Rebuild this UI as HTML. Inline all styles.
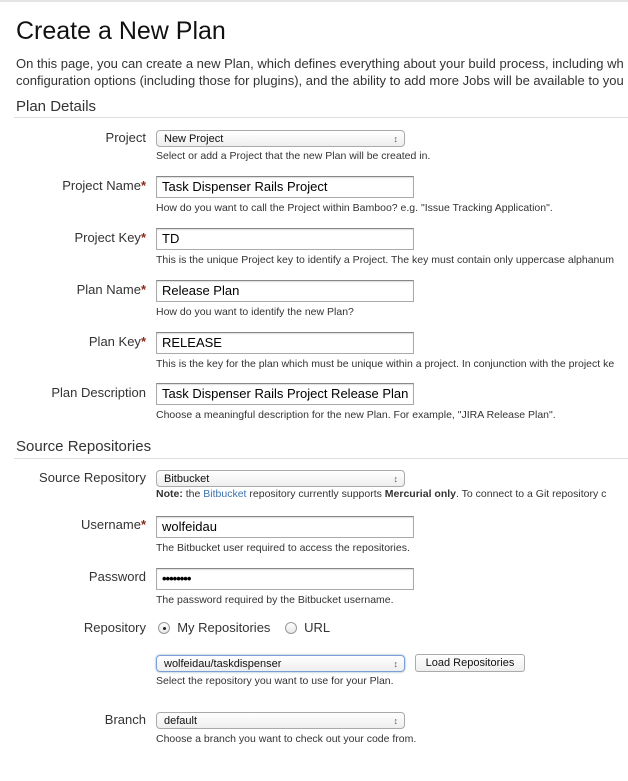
<!DOCTYPE html>
<html><head><meta charset="utf-8"><style>
body{margin:0;width:628px;height:781px;overflow:hidden;background:#fff;font-family:"Liberation Sans",Arial,sans-serif;color:#333;position:relative}
.a{position:absolute;white-space:nowrap}
.lbl{position:absolute;right:482px;font-size:13px;color:#333;white-space:nowrap}
.req{color:#8b2a1a;font-weight:bold}
.inp{position:absolute;left:156px;border:1px solid #aaa;border-top-color:#888;font-size:13px;color:#000;line-height:20px;padding-left:5px;box-sizing:border-box;width:258px;height:22px;box-shadow:inset 0 1px 1px #ddd}
.sel{position:absolute;left:156px;width:249px;height:17px;border:1px solid #aaa;border-radius:4px;background:linear-gradient(#fff,#eee);font-size:11px;color:#111;line-height:16px;padding-left:7px;box-sizing:border-box}
.sel:after{content:"\2195";position:absolute;right:6px;top:0;font-size:9px;color:#555}
.help{position:absolute;left:156px;font-size:10.5px;color:#333;white-space:nowrap}
.h2{position:absolute;left:16px;font-size:15px;color:#333}
.line{position:absolute;left:14px;right:0;height:1px;background:#ddd}
.radio{display:inline-block;width:12px;height:12px;border:1px solid #999;border-radius:50%;vertical-align:-2px;box-sizing:border-box;background:linear-gradient(#fff,#e8e8e8);position:relative}
</style></head><body>
<div class="a" style="left:0;right:0;top:0;height:2px;background:#e4e4e4"></div>
<div class="a" style="left:16px;top:17px;font-size:25px;color:#111">Create a New Plan</div>
<div class="a" style="left:16px;top:55px;font-size:13px;line-height:17px">On this page, you can create a new Plan, which defines everything about your build process, including wh<br>configuration options (including those for plugins), and the ability to add more Jobs will be available to you</div>
<div class="h2" style="top:98px">Plan Details</div>
<div class="line" style="top:117px"></div>

<div class="lbl" style="top:130px">Project</div>
<div class="sel" style="top:130px">New Project</div>
<div class="help" style="top:150px">Select or add a Project that the new Plan will be created in.</div>

<div class="lbl" style="top:178px">Project Name<span class="req">*</span></div>
<div class="inp" style="top:176px">Task Dispenser Rails Project</div>
<div class="help" style="top:202px">How do you want to call the Project within Bamboo? e.g. "Issue Tracking Application".</div>

<div class="lbl" style="top:230px">Project Key<span class="req">*</span></div>
<div class="inp" style="top:228px">TD</div>
<div class="help" style="top:254px">This is the unique Project key to identify a Project. The key must contain only uppercase alphanum</div>

<div class="lbl" style="top:282px">Plan Name<span class="req">*</span></div>
<div class="inp" style="top:280px">Release Plan</div>
<div class="help" style="top:306px">How do you want to identify the new Plan?</div>

<div class="lbl" style="top:334px">Plan Key<span class="req">*</span></div>
<div class="inp" style="top:332px">RELEASE</div>
<div class="help" style="top:358px">This is the key for the plan which must be unique within a project. In conjunction with the project ke</div>

<div class="lbl" style="top:385px">Plan Description</div>
<div class="inp" style="top:383px">Task Dispenser Rails Project Release Plan</div>
<div class="help" style="top:409px">Choose a meaningful description for the new Plan. For example, "JIRA Release Plan".</div>

<div class="h2" style="top:438px">Source Repositories</div>
<div class="line" style="top:458px"></div>

<div class="lbl" style="top:470px">Source Repository</div>
<div class="sel" style="top:470px">Bitbucket</div>
<div class="help" style="top:488px"><b>Note:</b> the <span style="color:#3b73af">Bitbucket</span> repository currently supports <b>Mercurial only</b>. To connect to a Git repository c</div>

<div class="lbl" style="top:517px">Username<span class="req">*</span></div>
<div class="inp" style="top:516px">wolfeidau</div>
<div class="help" style="top:542px">The Bitbucket user required to access the repositories.</div>

<div class="lbl" style="top:569px">Password</div>
<div class="inp" style="top:568px;letter-spacing:-1px;font-weight:bold">••••••••</div>
<div class="help" style="top:594px">The password required by the Bitbucket username.</div>

<div class="lbl" style="top:620px">Repository</div>
<div class="a" style="left:158px;top:620px;font-size:13px"><span class="radio"><span style="position:absolute;left:4px;top:4px;width:3px;height:3px;border-radius:50%;background:#222"></span></span>&nbsp; My Repositories &nbsp;&nbsp; <span class="radio"></span>&nbsp; URL</div>

<div class="sel" style="top:655px;border-color:#7a9ed6;box-shadow:0 0 2px #8ab">wolfeidau/taskdispenser</div>
<div class="a" style="left:415px;top:654px;width:110px;height:18px;border:1px solid #aaa;border-radius:3px;background:linear-gradient(#fff,#eee);font-size:11px;color:#111;text-align:center;line-height:17px;box-sizing:border-box">Load Repositories</div>
<div class="help" style="top:675px">Select the repository you want to use for your Plan.</div>

<div class="lbl" style="top:712px">Branch</div>
<div class="sel" style="top:712px">default</div>
<div class="help" style="top:733px">Choose a branch you want to check out your code from.</div>
</body></html>
